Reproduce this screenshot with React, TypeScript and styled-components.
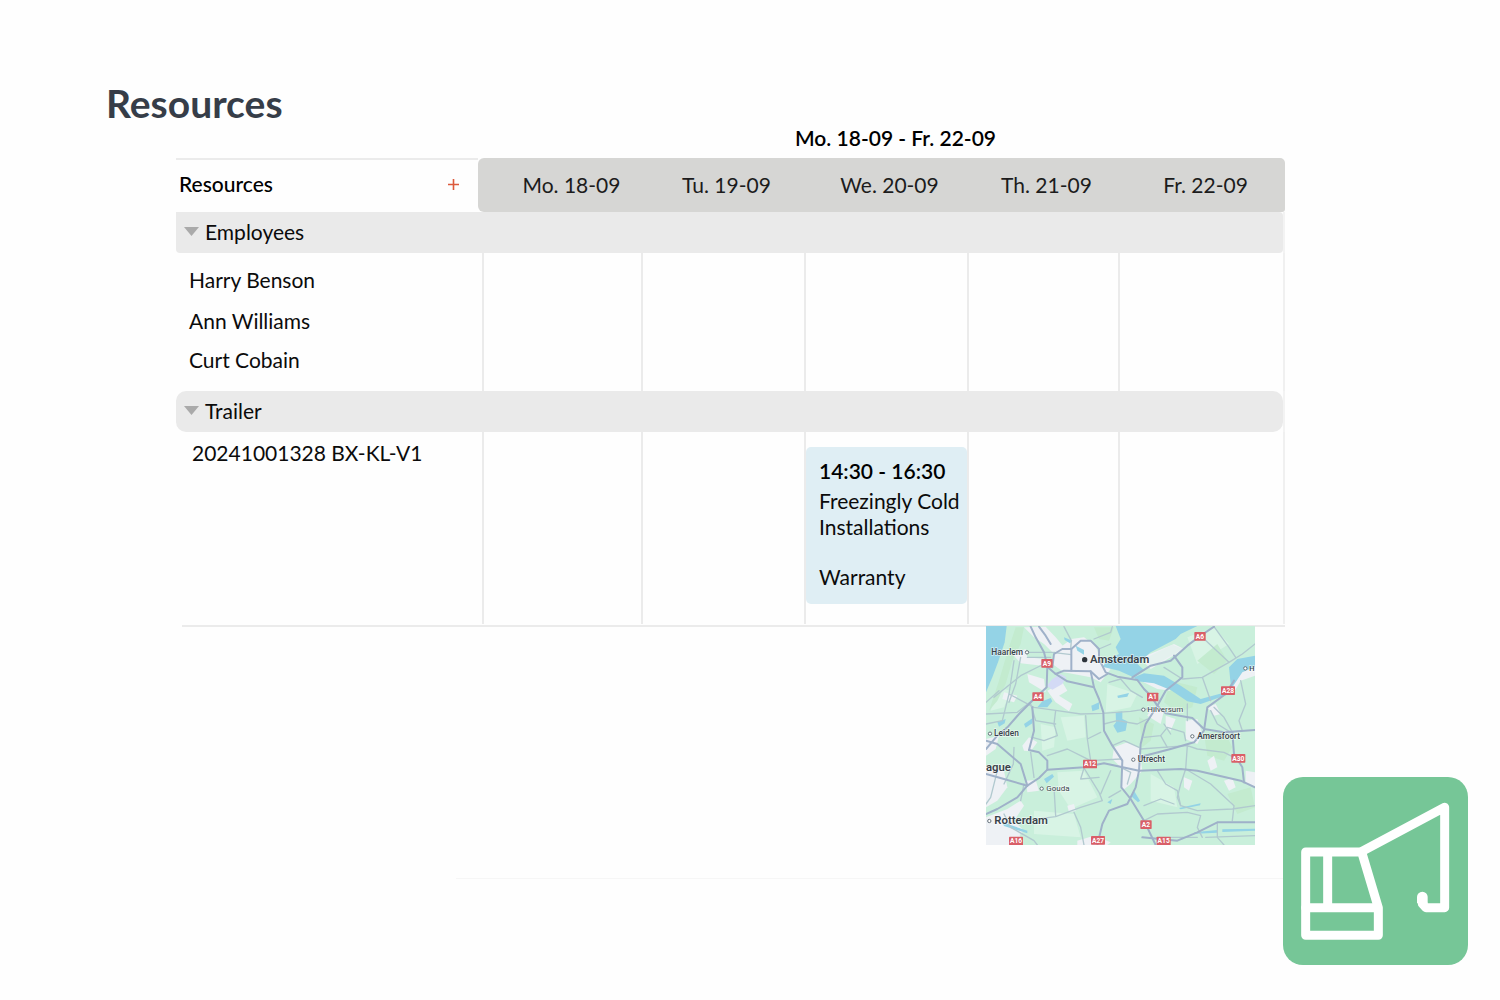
import React from "react";
import styled, { createGlobalStyle } from "styled-components";

const GlobalStyle = createGlobalStyle`
  *, *::before, *::after { box-sizing: border-box; }
  body {
    margin: 0;
    background: #fefefe;
    color: #0b0b0b;
    font-family: Lato, Carlito, sans-serif;
    font-size: 21px;
    line-height: 26px;
  }
`;

const line = "#ebebeb";

const Page = styled.main`
  min-height: 100vh;
  padding: 79px 32px 32px 106px;
`;

const Title = styled.h1`
  margin: 0;
  font-size: 39px;
  line-height: 48px;
  font-weight: 700;
  color: #363d48;
`;

const Schedule = styled.section`
  margin: 0 183px 0 70px;
`;

const RangeLabel = styled.h2`
  margin: 0 0 0 330px;
  padding: 0 0 9px;
  font-size: 21px;
  line-height: 22px;
  font-weight: 600;
  text-align: center;
  color: #000;
`;

const Table = styled.table`
  width: 100%;
  table-layout: fixed;
  border-collapse: separate;
  border-spacing: 0;

  th, td {
    padding: 0;
    font-weight: 400;
    text-align: left;
  }
`;

const HeadRow = styled.tr`
  height: 54px;
`;

const CornerCell = styled.th`
  border-top: 2px solid ${line};
`;

const Corner = styled.div`
  display: flex;
  justify-content: space-between;
  align-items: center;
  padding: 0 18px 4px 3px;
  font-weight: 500;
  color: #000;
`;

const AddButton = styled.button`
  display: flex;
  padding: 0;
  border: 0;
  background: none;
  color: #dc5a3c;
  cursor: pointer;
`;

const DayHead = styled.th<{ $first?: boolean; $last?: boolean }>`
  && {
    padding-left: ${(p) => (p.$first ? 24 : 8)}px;
    text-align: center;
    color: #1c1c1c;
  }
  background: #d6d6d4;
  border-radius: ${(p) => (p.$first ? "6px 0 0 6px" : p.$last ? "0 5px 3px 0" : "0")};
`;

const GroupCell = styled.td`
  border-right: 2px solid #f3f3f3;
`;

const GroupBar = styled.div<{ $radius: string }>`
  display: flex;
  align-items: center;
  gap: 6px;
  height: 41px;
  padding: 0 0 2px 8px;
  border-radius: ${(p) => p.$radius};
  background: #eaeaea;
`;

const Toggle = styled.button`
  display: flex;
  padding: 0;
  border: 0;
  background: none;
  cursor: pointer;
`;

const Row = styled.tr<{ $height: number }>`
  height: ${(p) => p.$height}px;
`;

const NameCell = styled.th<{ $edge?: "first" | "last" | "tall" }>`
  && {
    padding-left: ${(p) => (p.$edge === "tall" ? 16 : 13)}px;
    padding-top: ${(p) => (p.$edge === "tall" ? 8 : p.$edge === "first" ? 6 : 0)}px;
    padding-bottom: ${(p) => (p.$edge === "last" ? 12 : 0)}px;
    vertical-align: ${(p) => (p.$edge === "tall" ? "top" : "middle")};
  }
`;

const DayCell = styled.td<{ $last?: boolean }>`
  border-left: 2px solid ${line};
  border-right: ${(p) => (p.$last ? "2px solid #f0f0f0" : "0")};
  vertical-align: top;
`;

const EventCard = styled.article`
  margin-top: 15px;
  padding: 11px 0 14px 13px;
  border-radius: 5px;
  background: #dfeef4;

  p { margin: 0; }
  p + p { margin-top: 24px; }
`;

const EventTime = styled.h3`
  margin: 0 0 4px;
  font-size: 21px;
  line-height: 26px;
  font-weight: 600;
  color: #000;
`;

const Rule = styled.hr`
  height: 2px;
  margin: 1px 0 0 6px;
  border: 0;
  background: ${line};
`;

const Lower = styled.div`
  display: flex;
  justify-content: flex-end;
  align-items: flex-start;
  margin-top: -1px;
  padding-left: 350px;
`;

const MapArea = styled.section`
  display: flex;
  flex: 1;
  justify-content: flex-end;
  padding: 0 28px 33px 0;
  border-bottom: 1px solid #f6f6f6;
`;

const Badge = styled.div`
  display: flex;
  justify-content: center;
  align-items: center;
  width: 185px;
  height: 188px;
  margin-top: 151px;
  border-radius: 20px;
  background: #76c697;
`;

const Plus = () => (
  <svg width="13" height="13" viewBox="0 0 13 13" aria-hidden="true">
    <path d="M6.5 1v11M1 6.500h11" stroke="currentColor" strokeWidth="1.6" fill="none" />
  </svg>
);

const Caret = () => (
  <svg width="15" height="9" viewBox="0 0 15 9" aria-hidden="true">
    <path d="M0 0h15L7.500 9z" fill="#aaaaaa" />
  </svg>
);

const Crane = () => (
  <svg width="185" height="188" viewBox="39 36 555 564" role="img" aria-label="Crane">
    <g fill="none" stroke="#fff" strokeWidth="27" strokeLinejoin="round" strokeLinecap="round">
      <path d="M107 261H275L325 428V511H107Z" />
      <path d="M173 265V424M107 428H322" />
      <path d="M278 258L524 127V428H468L457 416V396" />
    </g>
    <path d="M441 396a16 16 0 0 1 32 0v19h-32z" fill="#fff" />
  </svg>
);

const urban = [
  "M210 85L262 45L300 40L335 65L350 110L380 135L350 175L320 160L240 145L205 120Z",
  "M120 10L185 8L215 40L240 70L205 85L180 60L150 40Z",
  "M85 90L125 75L130 100L180 105L175 125L110 118Z",
  "M130 150L180 165L185 205L160 190L135 175Z",
  "M190 200L235 175L250 200L225 215L265 240L255 262L215 235Z",
  "M485 95L570 60L600 75L560 100L500 135L485 120Z",
  "M390 370L430 355L465 370L475 440L440 480L415 500L410 430L385 405Z",
  "M605 290L640 285L655 330L640 360L605 345Z",
  "M500 255L540 260L530 300L490 275Z",
  "M6 345L45 335L35 375L6 395Z",
  "M115 365L135 340L160 355L140 382L120 380Z",
  "M6 425L60 440L70 490L40 530L6 550Z",
  "M6 580L70 555L110 530L120 545L90 590L120 620L75 663L6 663Z",
  "M670 250L695 240L710 270L690 275Z",
  "M720 470L745 462L755 490L735 500Z",
  "M755 130L813 125V155L770 170L750 205L735 200Z",
  "M670 410L690 395L700 430L680 440Z",
  "M545 275L575 285L560 320L545 310Z",
  "M785 440L813 445V490L785 480Z",
  "M600 460L625 470L615 500L600 490Z",
  "M280 650L330 635L380 655L370 663H280Z",
  "M125 470L155 468L165 500L130 505Z",
  "M470 170L540 175L560 200L520 195Z",
  "M60 205L100 215L90 235L55 225Z",
  "M250 545L270 540L275 560L255 565Z",
  "M30 620L90 600L110 640L60 663Z",
];

const woods = [
  "M95 10L120 10L110 60L85 110L65 180L40 230L15 260L45 170L70 85Z",
  "M560 170L640 190L625 250L580 265L540 235Z",
  "M465 280L510 300L500 350L475 370Z",
  "M660 330L720 320L745 370L720 410L670 395Z",
  "M730 510L800 490L813 550L760 570Z",
  "M640 110L700 60L730 110L690 150Z",
  "M330 10L390 10L375 50L345 45Z",
];

const fields = [
  "M230 280L300 275L305 340L250 350Z",
  "M170 300L215 310L210 370L175 380Z",
  "M220 445L300 440L340 520L260 555L225 500Z",
  "M500 450L570 490L580 550L500 530Z",
  "M610 40L690 10L735 60L640 120Z",
  "M40 190L80 200L60 250L20 260Z",
  "M370 180L460 210L440 250L365 265Z",
  "M150 560L270 570L290 640L150 630Z",
];

const water = [
  "M6 6H68L62 55L42 115L25 160L6 205Z",
  "M395 6H640L590 30L575 45L500 85L460 120L480 138L445 158L405 140L355 128L375 105L405 90L395 70L410 45Z",
  "M450 160L480 148L540 155L590 185L650 225L725 205L740 180L735 130L760 105L813 95V128L775 145L745 190L730 212L650 240L610 232L560 198L510 178L460 172Z",
  "M395 265L415 262L415 285L430 292L425 320L400 326L388 305L396 295Z",
  "M160 250L175 232L200 222L205 232L190 250Z",
  "M322 245L345 235L345 255L325 262Z",
  "M120 300L145 283L145 298L125 311Z",
  "M40 295L65 285L62 298L45 308Z",
  "M180 465L205 450L210 458L188 478Z",
  "M275 65L300 78L300 92L280 80Z",
  "M240 40L265 50L258 58L242 48Z",
  "M400 215L435 207L430 218L402 222Z",
  "M585 552L650 538L648 544L590 556Z",
  "M630 625L700 618L700 626L635 629Z",
  "M715 616L813 614V620L715 624Z",
  "M450 500L468 530L462 535L440 515Z",
  "M55 595L130 620L130 628L60 606Z",
  "M370 535L385 525L380 540Z",
];

const majorRoads = [
  "M140 8L155 40L180 85L190 125L188 190L150 225L105 270L70 310L40 335L6 375",
  "M165 8L185 35L200 60",
  "M205 130L210 90L235 75H262L290 50L320 50L345 75L345 105L365 145L400 158L460 168L480 195L500 215L520 245",
  "M180 120L215 150L240 140L320 142L345 165L370 150",
  "M215 150L250 172L330 190L345 225L358 265L360 320L385 365L415 410L412 490L440 525L480 590L515 663",
  "M320 142L330 190",
  "M262 75V140",
  "M813 490L770 470L640 440L590 435L465 440L360 418L300 430L190 437L165 462L130 485L100 520L40 555L6 570",
  "M6 450L60 465L130 485M190 437V410L165 385L135 378",
  "M465 440L470 360L485 300L520 245L545 200L595 160V130L570 95",
  "M520 245L545 268L625 282L660 315L720 325L813 318",
  "M465 400L560 375L630 355L660 320L670 250L725 210L750 170",
  "M465 440L455 490L430 540L375 560L355 600L340 663",
  "M445 160L500 125L560 110L610 65L650 35L690 8",
  "M475 640L580 650L640 625L700 595L813 595",
  "M745 325L750 390L775 430L780 475",
  "M130 485L110 420L40 360L6 350",
  "M135 378L150 320L145 250",
];

const minorRoads = [
  "M260 75L262 50L240 8M130 85H205L262 92M130 100H200",
  "M90 110L75 210L55 290L6 300M110 100L95 180L75 235M75 210L150 250L220 260L290 270L355 268L440 262L520 250",
  "M6 270L100 265L150 225M30 220L110 155L180 120",
  "M215 260L210 300L220 335L180 350L145 340M305 275L310 345L320 410M310 345L350 325",
  "M330 45L380 25L385 8M345 75L380 60M375 175L410 165L440 200L475 220",
  "M650 35L735 115L655 160L595 165L540 130M735 115L775 90L813 60M690 8L735 70L755 100M655 160L680 230",
  "M480 340L530 335L550 310L600 325L605 350M540 300L560 330M610 240V290M690 250L720 280L745 325",
  "M470 375L610 365L640 375L720 385L750 400M530 335L550 370M610 365L605 435L590 480L580 520L590 545",
  "M770 170L785 240L765 290L775 320M680 260L700 300L740 325",
  "M520 440L545 480L580 500L590 545L640 560L745 555L813 545M605 435L680 480L750 545L745 590",
  "M90 370L88 420L60 480M190 395L250 375L290 395L320 410L410 405",
  "M150 460L140 385M210 490L215 575M300 432L345 505L355 530L290 550L215 578L120 590M300 432L290 465L345 460",
  "M270 565L290 610L300 663M375 520L410 500M380 440L350 510",
  "M480 590L520 570L610 565L650 575L640 610L655 640M480 545L530 525L570 540",
  "M700 595V640L720 663M110 530L120 480M60 570L80 610L150 650L160 663M40 440L20 520L6 540",
  "M140 240L155 290L215 300M385 365L420 350L465 370M410 430L440 445L430 480",
  "M360 300L400 290L460 300L490 285M6 235L45 200",
  "M665 640L813 635M530 663L560 640L640 640",
];

const airport = "M188 185L205 165L230 150L247 160L235 180L205 197Z";

const towns: { x: number; y: number; size: number; weight: number; name: string; dot?: number }[] = [
  { x: 22, y: 93, size: 25, weight: 500, name: "Haarlem", dot: 129 },
  { x: 318, y: 117, size: 34, weight: 600, name: "Amsterdam" },
  { x: 490, y: 265, size: 24, weight: 400, name: "Hilversum", dot: 478 },
  { x: 30, y: 337, size: 25, weight: 500, name: "Leiden", dot: 18 },
  { x: 640, y: 345, size: 25, weight: 500, name: "Amersfoort", dot: 625 },
  { x: 461, y: 415, size: 25, weight: 500, name: "Utrecht", dot: 448 },
  { x: 6, y: 441, size: 34, weight: 600, name: "ague" },
  { x: 187, y: 502, size: 24, weight: 400, name: "Gouda", dot: 173 },
  { x: 31, y: 599, size: 34, weight: 600, name: "Rotterdam", dot: 16 },
  { x: 796, y: 141, size: 22, weight: 500, name: "H", dot: 784 },
];

const shields: [number, number, string][] = [
  [648, 37, "A6"],
  [189, 118, "A9"],
  [162, 218, "A4"],
  [506, 219, "A1"],
  [732, 200, "A28"],
  [318, 420, "A12"],
  [763, 403, "A30"],
  [486, 602, "A2"],
  [342, 649, "A27"],
  [96, 651, "A16"],
  [539, 651, "A15"],
];

const MapPicture = () => (
  <svg width="269" height="219" viewBox="6 6 807 657" role="img" aria-label="Map of the area around Amsterdam and Utrecht">
    <rect x="6" y="6" width="807" height="657" fill="#c9efdb" />
    <g fill="#d8f4e5">{fields.map((d) => <path key={d} d={d} />)}</g>
    <g fill="#c3ebcf">{woods.map((d) => <path key={d} d={d} />)}</g>
    <g fill="#eef1f5">{urban.map((d) => <path key={d} d={d} />)}</g>
    <g fill="#94d3e6">{water.map((d) => <path key={d} d={d} />)}</g>
    <path d="M490 100L565 62L598 75L555 98L500 132Z" fill="#e4f1ee" />
    <path d={airport} fill="#d3daf5" />
    <g fill="none" strokeLinejoin="round" strokeLinecap="round">
      <g stroke="#b1c9cf" strokeWidth="4">{minorRoads.map((d) => <path key={d} d={d} />)}</g>
      <g stroke="#9fb1c9" strokeWidth="6">{majorRoads.map((d) => <path key={d} d={d} />)}</g>
    </g>
    <g fontFamily="Roboto, sans-serif" fill="#39424a" stroke="#ffffff" strokeOpacity="0.6" strokeWidth="4" paintOrder="stroke">
      {towns.map((t) => (
        <text key={t.name} x={t.x} y={t.y} fontSize={t.size} fontWeight={t.weight}>{t.name}</text>
      ))}
    </g>
    <circle cx="302" cy="107" r="8" fill="#2d343b" />
    <g fill="#ffffff" stroke="#66727b" strokeWidth="3">
      {towns.filter((t) => t.dot).map((t) => (
        <circle key={t.name} cx={t.dot} cy={t.y - 8} r="5" />
      ))}
    </g>
    {shields.map(([x, y, name]) => {
      const half = name.length > 2 ? 21 : 17;
      return (
        <g key={name}>
          <rect x={x - half} y={y - 13} width={half * 2} height="26" rx="2" fill="#d95f68" />
          <text x={x} y={y + 7} fontFamily="Roboto, sans-serif" fontSize="20" fontWeight="700" textAnchor="middle" fill="#fff">{name}</text>
        </g>
      );
    })}
  </svg>
);

const days = ["Mo. 18-09", "Tu. 19-09", "We. 20-09", "Th. 21-09", "Fr. 22-09"];
const columns = [302, 4, 159, 163, 163, 151, 167];

const people: { name: string; height: number; edge?: "first" | "last" }[] = [
  { name: "Harry Benson", height: 48, edge: "first" },
  { name: "Ann Williams", height: 40 },
  { name: "Curt Cobain", height: 50, edge: "last" },
];

const Group = ({ name, radius }: { name: string; radius: string }) => (
  <tr>
    <GroupCell colSpan={7}>
      <GroupBar $radius={radius}>
        <Toggle type="button" aria-label={`Collapse ${name}`}><Caret /></Toggle>
        {name}
      </GroupBar>
    </GroupCell>
  </tr>
);

export default function App() {
  return (
    <>
      <GlobalStyle />
      <Page>
        <Title>Resources</Title>
        <Schedule>
          <RangeLabel>Mo. 18-09 - Fr. 22-09</RangeLabel>
          <Table>
            <colgroup>
              {columns.map((width, i) => <col key={i} width={width} />)}
            </colgroup>
            <thead>
              <HeadRow>
                <CornerCell scope="col">
                  <Corner>
                    Resources
                    <AddButton type="button" aria-label="Add resource"><Plus /></AddButton>
                  </Corner>
                </CornerCell>
                {days.map((day, i) => (
                  <DayHead key={day} scope="col" colSpan={i === 0 ? 2 : 1} $first={i === 0} $last={i === 4}>
                    {day}
                  </DayHead>
                ))}
              </HeadRow>
            </thead>
            <tbody>
              <Group name="Employees" radius="0 4px 4px 4px" />
              {people.map((p) => (
                <Row key={p.name} $height={p.height}>
                  <NameCell scope="row" colSpan={2} $edge={p.edge}>{p.name}</NameCell>
                  {days.map((day, i) => <DayCell key={day} $last={i === 4} />)}
                </Row>
              ))}
              <Group name="Trailer" radius="10px" />
              <Row $height={192}>
                <NameCell scope="row" colSpan={2} $edge="tall">20241001328 BX-KL-V1</NameCell>
                {days.map((day, i) => (
                  <DayCell key={day} $last={i === 4}>
                    {i === 2 && (
                      <EventCard>
                        <EventTime>14:30 - 16:30</EventTime>
                        <p>Freezingly Cold Installations</p>
                        <p>Warranty</p>
                      </EventCard>
                    )}
                  </DayCell>
                ))}
              </Row>
            </tbody>
          </Table>
          <Rule />
        </Schedule>
        <Lower>
          <MapArea><MapPicture /></MapArea>
          <Badge><Crane /></Badge>
        </Lower>
      </Page>
    </>
  );
}
